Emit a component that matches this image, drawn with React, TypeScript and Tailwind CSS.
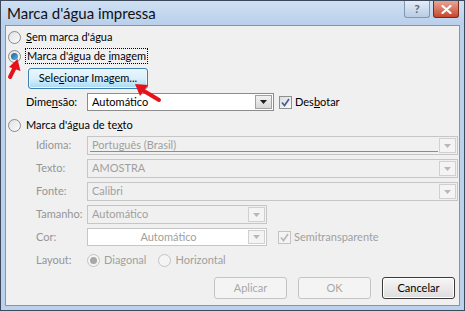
import React from "react";

const Radio = ({ checked = false, disabled = false }: { checked?: boolean; disabled?: boolean }) => (
  <span
    className={`flex h-[13px] w-[13px] shrink-0 items-center justify-center rounded-full border ${
      disabled ? "border-[#c4c4c4] bg-[#f4f4f4]" : "border-[#8a8a8a] bg-gradient-to-br from-[#e2e2e2] to-[#fafafa]"
    }`}
  >
    {checked && (
      <span
        className={`h-[7px] w-[7px] rounded-full ${
          disabled ? "bg-[#a8a8a8]" : "bg-gradient-to-br from-[#1b5f94] to-[#5cb6e8]"
        }`}
      />
    )}
  </span>
);

const Checkbox = ({ checked = false, disabled = false }: { checked?: boolean; disabled?: boolean }) => (
  <span
    className={`flex h-[13px] w-[13px] shrink-0 items-center justify-center border ${
      disabled ? "border-[#c4c4c4] bg-[#f4f4f4]" : "border-[#8e8f8f] bg-gradient-to-br from-[#dcdcdc] to-[#fbfbfb]"
    }`}
  >
    {checked && (
      <svg width="9" height="9" viewBox="0 0 9 9">
        <path
          d="M1 4.5 L3.5 7.5 L8 1"
          fill="none"
          stroke={disabled ? "#b8b8b8" : "#4a5f97"}
          strokeWidth="1.7"
        />
      </svg>
    )}
  </span>
);

const Arrow = ({ disabled = false }: { disabled?: boolean }) => (
  <span
    className={`flex h-full w-[17px] shrink-0 items-center justify-center border ${
      disabled ? "border-[#d0d0d0] bg-[#f4f4f4]" : "border-[#a0a0a0] bg-gradient-to-b from-[#f2f2f2] to-[#d8d8d8]"
    }`}
  >
    <svg width="7" height="4" viewBox="0 0 7 4">
      <path d="M0 0 H7 L3.5 4 Z" fill={disabled ? "#b8b8b8" : "#1e1e1e"} />
    </svg>
  </span>
);

const Combo = ({
  value,
  width,
  disabled = false,
  white = false,
  center = false,
  line = false,
}: {
  value: string;
  width: string;
  disabled?: boolean;
  white?: boolean;
  center?: boolean;
  line?: boolean;
}) => (
  <div
    className={`relative flex h-full items-stretch border p-[1px] ${width} ${
      disabled ? "border-[#c6c6c6]" : "border-[#8c8c8c]"
    } ${white ? "bg-white" : "bg-[#f0f0f0]"}`}
  >
    <span
      className={`flex flex-1 items-center px-[3px] ${center ? "justify-center" : ""} ${
        disabled ? "text-[#a0a0a0]" : "text-black"
      }`}
    >
      {value}
    </span>
    {line && <span className="absolute bottom-[2px] left-[2px] right-[19px] h-[1px] bg-[#8c8c8c]" />}
    <Arrow disabled={disabled} />
  </div>
);

const Label = ({ children }: { children: React.ReactNode }) => (
  <span className="w-[51px] shrink-0 text-[#959595]">{children}</span>
);

export default function App() {
  return (
    <div className="relative h-[311px] w-[465px] overflow-hidden font-['Lato','Liberation_Sans',sans-serif] text-[11px] text-black">
      <div className="flex h-full w-full flex-col border border-[#3c4a5c] bg-[#bcd2ec]">
        {/* Title bar */}
        <div className="flex h-[24px] shrink-0 items-center justify-between bg-gradient-to-b from-[#cfe0f3] to-[#b9cfea] pl-[6px] pr-[5px]">
          <span className="text-[15px] text-[#111]">Marca d'água impressa</span>
          <div className="flex gap-[3px] self-start">
            <span className="flex h-[17px] w-[26px] items-center justify-center rounded-b-[3px] border border-t-0 border-[#8396ae] bg-gradient-to-b from-[#e4edf7] to-[#b9cce3] text-[12px] font-bold text-[#5a6a80]">
              ?
            </span>
            <span className="flex h-[17px] w-[26px] items-center justify-center rounded-b-[3px] border border-t-0 border-[#7a2a1e] bg-gradient-to-b from-[#e8a493] to-[#c6452d]">
              <svg width="11" height="9" viewBox="0 0 11 9">
                <path d="M1.5 1 L9.5 8 M9.5 1 L1.5 8" stroke="#fff" strokeWidth="2.2" strokeLinecap="round" />
              </svg>
            </span>
          </div>
        </div>

        {/* Body */}
        <div className="mx-[4px] mb-[4px] flex flex-1 flex-col border border-[#8296ad] bg-[#f0f0f0] pl-[2px]">
          <div className="mt-[3px] flex h-[16px] items-center gap-[5px]">
            <Radio />
            <span>
              <u>S</u>em marca d'água
            </span>
          </div>

          <div className="mt-[3px] flex h-[16px] items-center gap-[4px]">
            <Radio checked />
            <span className="border border-dotted border-black px-[1px] leading-[14px]">
              Marca d'água de <u>i</u>magem
            </span>
          </div>

          <div className="ml-[20px] mt-[4px] flex h-[21px]">
            <span className="flex w-[120px] items-center justify-center rounded-[3px] border border-[#3c7fb1] bg-gradient-to-b from-[#eaf6fd] via-[#d9f0fc] to-[#a7d9f5] shadow-[inset_0_0_0_1px_#eaf6fd]">
              Sele<u>c</u>ionar Imagem...
            </span>
          </div>

          <div className="ml-[18px] mt-[4px] flex h-[18px] items-center">
            <span className="w-[61px]">
              Dime<u>n</u>são:
            </span>
            <Combo value="Automático" width="w-[187px]" white />
            <span className="ml-[5px] flex items-center gap-[3px]">
              <Checkbox checked />
              <span>
                Des<u>b</u>otar
              </span>
            </span>
          </div>

          <div className="mt-[6px] flex h-[16px] items-center gap-[5px]">
            <Radio />
            <span>
              Marca d'água de te<u>x</u>to
            </span>
          </div>

          <div className="ml-[28px] mt-[3px] flex h-[19px] items-center">
            <Label>Idioma:</Label>
            <Combo value="Português (Brasil)" width="w-[371px]" disabled line />
          </div>
          <div className="ml-[28px] mt-[4px] flex h-[19px] items-center">
            <Label>Texto:</Label>
            <Combo value="AMOSTRA" width="w-[371px]" disabled />
          </div>
          <div className="ml-[28px] mt-[4px] flex h-[19px] items-center">
            <Label>Fonte:</Label>
            <Combo value="Calibri" width="w-[371px]" disabled />
          </div>
          <div className="ml-[28px] mt-[4px] flex h-[19px] items-center">
            <Label>Tamanho:</Label>
            <Combo value="Automático" width="w-[180px]" disabled />
          </div>
          <div className="ml-[28px] mt-[4px] flex h-[18px] items-center">
            <Label>Cor:</Label>
            <Combo value="Automático" width="w-[180px]" disabled white center />
            <span className="ml-[11px] flex items-center gap-[3px]">
              <Checkbox checked disabled />
              <span className="text-[#a0a0a0]">Semitransparente</span>
            </span>
          </div>
          <div className="ml-[28px] mt-[6px] flex h-[16px] items-center text-[#a0a0a0]">
            <Label>Layout:</Label>
            <span className="flex items-center gap-[4px]">
              <Radio checked disabled />
              Diagonal
            </span>
            <span className="ml-[12px] flex items-center gap-[4px]">
              <Radio disabled />
              Horizontal
            </span>
          </div>

          <div className="mr-[4px] mt-[9px] flex h-[22px] justify-end gap-[11px]">
            <span className="flex w-[73px] items-center justify-center rounded-[3px] border border-[#c4c4c4] bg-[#f4f4f4] text-[#a8a8a8]">
              Aplicar
            </span>
            <span className="flex w-[73px] items-center justify-center rounded-[3px] border border-[#c4c4c4] bg-[#f4f4f4] text-[#a8a8a8]">
              OK
            </span>
            <span className="flex w-[73px] items-center justify-center rounded-[3px] border border-[#3a3a3a] bg-gradient-to-b from-[#f6f6f6] to-[#dddddd] shadow-[inset_0_0_0_1px_#fff]">
              Cancelar
            </span>
          </div>
        </div>
      </div>

      {/* Red annotation arrows */}
      <svg className="absolute left-[5px] top-[57px]" width="20" height="23" viewBox="0 0 20 23">
        <path d="M5 20 L9.5 11" stroke="#e5121b" strokeWidth="4" strokeLinecap="round" />
        <path d="M12.5 2 L15.5 14 L4 10 Z" fill="#e5121b" />
      </svg>
      <svg className="absolute left-[133px] top-[82px]" width="30" height="22" viewBox="0 0 30 22">
        <path d="M26 18 L11 9" stroke="#e5121b" strokeWidth="4" strokeLinecap="round" />
        <path d="M2 2 L15 3 L7 14 Z" fill="#e5121b" />
      </svg>
    </div>
  );
}
